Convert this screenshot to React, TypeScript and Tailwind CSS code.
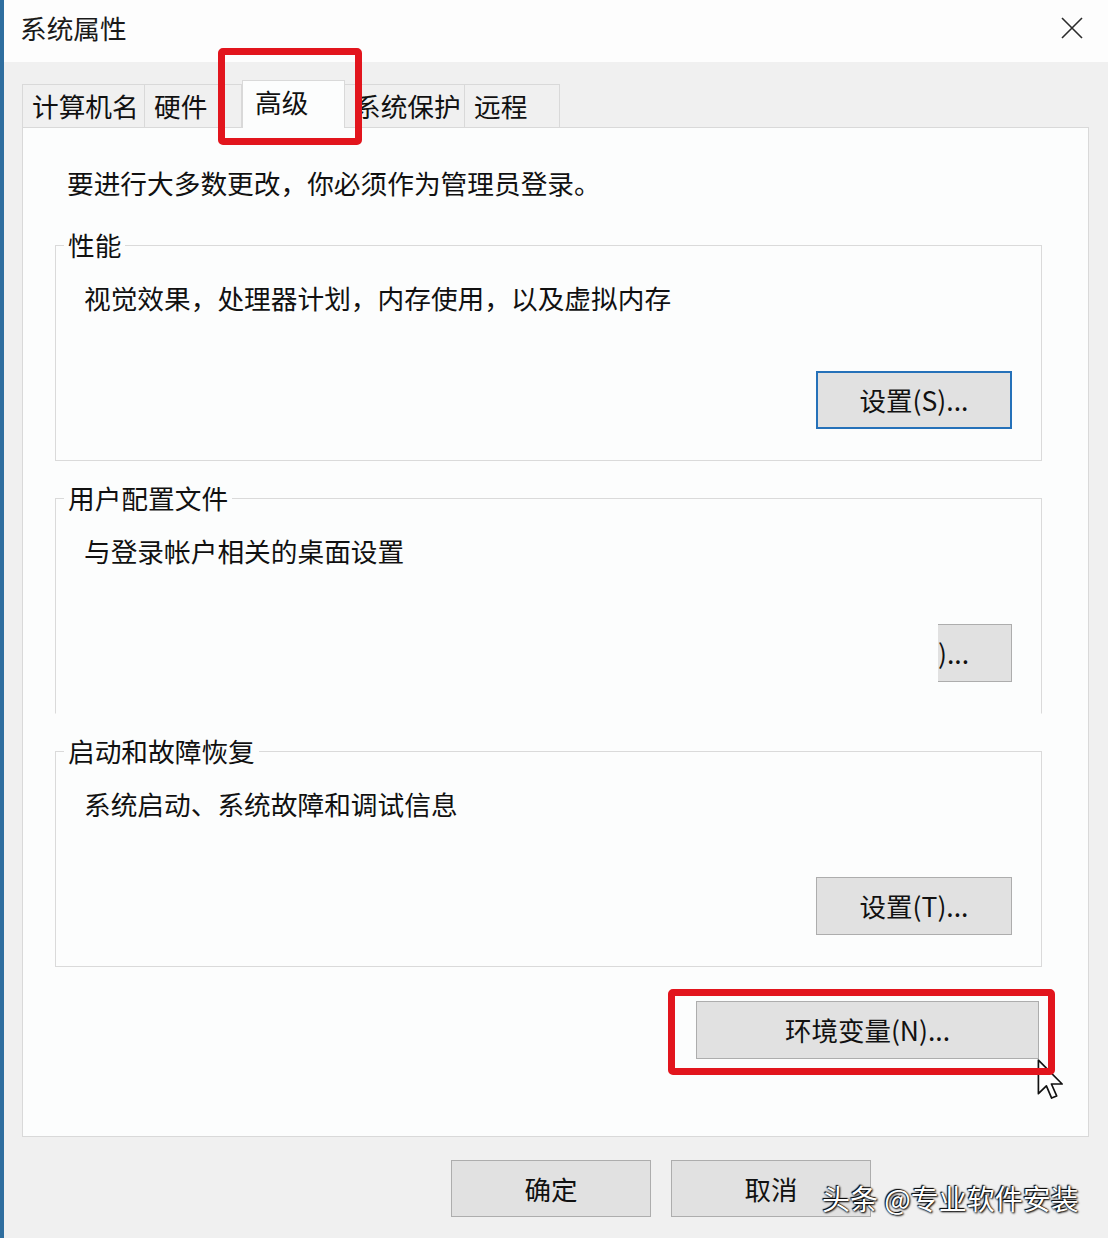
import React from "react";

const font = "font-['Noto_Sans_CJK_SC','Noto_Sans',sans-serif]";

const tabs = [
  { label: "计算机名", w: "w-[123px]" },
  { label: "硬件", w: "w-[97px]" },
  { label: "高级", w: "w-[103px]", active: true },
  { label: "系统保护", w: "w-[120px]" },
  { label: "远程", w: "w-[95px]" },
];

// grey Windows-style push button
const WinButton = ({ children, className = "" }: { children: React.ReactNode; className?: string }) => (
  <div
    className={`flex items-center justify-center bg-[#e1e1e1] text-[26.5px] leading-[36px] text-[#111] ${className}`}
  >
    {children}
  </div>
);

const GroupBox = ({
  title,
  desc,
  button,
  className = "",
}: {
  title: string;
  desc: string;
  button: React.ReactNode;
  className?: string;
}) => (
  <fieldset className={`ml-[32px] w-[987px] border border-[#dadada] ${className}`}>
    <legend className="ml-[8px] px-[4px] text-[26.7px] leading-[36px] text-[#111]">{title}</legend>
    <div className="flex flex-col pl-[28px] pr-[29px] pb-[31px]">
      <div className="pt-[17px] text-[26.7px] leading-[36px] text-[#111]">{desc}</div>
      <div className="mt-[55px] self-end">{button}</div>
    </div>
  </fieldset>
);

export default function App() {
  return (
    <div className={`relative w-[1108px] h-[1238px] overflow-hidden flex bg-[#f0f0f0] ${font}`}>
      <div className="w-[4px] h-full bg-[#2f6e9f]" />
      <div className="flex-1 flex flex-col">
        {/* title bar */}
        <div className="h-[62px] bg-[#fdfdfd] flex items-start justify-between pl-[16px] pr-[25px]">
          <div className="pt-[10px] text-[26.7px] leading-[36px] text-[#1a1a1a]">系统属性</div>
          <svg width="22" height="22" viewBox="0 0 22 22" className="mt-[17px]">
            <path d="M1 1L21 21M21 1L1 21" stroke="#2b2b2b" strokeWidth="1.6" />
          </svg>
        </div>

        {/* tabs */}
        <div className="pt-[18px] pl-[18px] flex items-end">
          {tabs.map((t, i) =>
            t.active ? (
              <div
                key={t.label}
                className={`${t.w} h-[48px] -mb-px relative z-10 bg-[#fcfdfd] border-t border-l border-r border-[#d9d9d9] flex pl-[12px] pt-[3px] text-[26.7px] leading-[36px] text-[#111]`}
              >
                {t.label}
              </div>
            ) : (
              <div
                key={t.label}
                className={`${t.w} h-[43px] border-t border-r ${i === 0 ? "border-l" : ""} border-[#d9d9d9] bg-[#f0f0f0] flex items-center pl-[9px] text-[26.7px] leading-[36px] text-[#111]`}
              >
                {t.label}
              </div>
            )
          )}
        </div>

        {/* panel */}
        <div className="ml-[18px] w-[1067px] h-[1010px] border border-[#d9d9d9] bg-[#fcfdfd] flex flex-col">
          <div className="ml-[44px] mt-[37px] text-[26.7px] leading-[36px] text-[#111]">
            要进行大多数更改，你必须作为管理员登录。
          </div>

          <GroupBox
            className="mt-[26px]"
            title="性能"
            desc="视觉效果，处理器计划，内存使用，以及虚拟内存"
            button={
              <WinButton className="w-[196px] h-[58px] border-2 border-[#2571b9]">设置(S)...</WinButton>
            }
          />

          <GroupBox
            className="mt-[19px] !border-b-transparent"
            title="用户配置文件"
            desc="与登录帐户相关的桌面设置"
            button={
              <WinButton className="w-[74px] h-[58px] border-t border-r border-b border-[#adadad] !justify-start">
                )...
              </WinButton>
            }
          />

          <GroupBox
            className="mt-[19px]"
            title="启动和故障恢复"
            desc="系统启动、系统故障和调试信息"
            button={
              <WinButton className="w-[196px] h-[58px] border border-[#adadad]">设置(T)...</WinButton>
            }
          />

          <WinButton className="mt-[34px] mr-[49px] self-end w-[343px] h-[58px] border border-[#adadad]">
            环境变量(N)...
          </WinButton>
        </div>

        {/* dialog buttons */}
        <div className="mt-[23px] pl-[447px] flex gap-[20px]">
          <WinButton className="w-[200px] h-[57px] border border-[#adadad]">确定</WinButton>
          <WinButton className="w-[200px] h-[57px] border border-[#adadad]">取消</WinButton>
        </div>
      </div>

      {/* mouse cursor */}
      <svg
        width="28"
        height="42"
        viewBox="0 0 13 20"
        className="absolute left-[1037px] top-[1059px]"
      >
        <path
          d="M0.5 0.5L0.5 16.5L4.3 12.8L6.8 18.6L9.2 17.6L6.7 11.9L11.8 11.9Z"
          fill="#fff"
          stroke="#111"
          strokeWidth="0.8"
          strokeLinejoin="round"
        />
      </svg>

      {/* red highlight boxes */}
      <div className="absolute left-[218px] top-[48px] w-[144px] h-[97px] border-[7px] border-[#e2151d] rounded-[5px]" />
      <div className="absolute left-[668px] top-[989px] w-[387px] h-[86px] border-[7px] border-[#e2151d] rounded-[5px]" />

      {/* watermark */}
      <div className="absolute left-[822px] top-[1180px] text-[28px] leading-[36px] text-white [text-shadow:0_0_2px_#000,1px_1px_2px_#000,-1px_-1px_1px_#000]">
        头条 @专业软件安装
      </div>
    </div>
  );
}
